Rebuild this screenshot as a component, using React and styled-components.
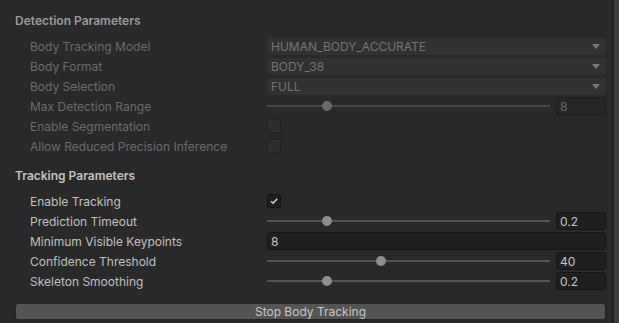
import React from 'react';
import styled, { createGlobalStyle } from 'styled-components';

const GlobalStyle = createGlobalStyle`
  *, *::before, *::after {
    box-sizing: border-box;
  }
  html, body {
    margin: 0;
    padding: 0;
    background: #292929;
  }
  body {
    font-family: Inter, "Noto Sans", sans-serif;
    font-size: 12px;
    -webkit-font-smoothing: antialiased;
  }
`;

const Window = styled.div`
  display: flex;
  width: 619px;
  height: 323px;
  overflow: hidden;
  background: #292929;
`;

const Inspector = styled.div`
  flex: 1;
  display: flex;
  flex-direction: column;
  padding: 11px 6px 0 15px;
  gap: 10px;
`;

const Scrollbar = styled.div`
  width: 7px;
  border-left: 2px solid #1f1f1f;
  background: #3c3c3c;
`;

const Section = styled.div`
  display: flex;
  flex-direction: column;
`;

const Header = styled.div`
  height: 20px;
  line-height: 20px;
  margin-bottom: 5px;
  font-weight: 600;
  color: ${(p) => (p.disabled ? '#9a9a9a' : '#c2c2c2')};
`;

const Row = styled.div`
  display: flex;
  align-items: center;
  height: 20px;
  padding-left: 15px;
`;

const Label = styled.div`
  width: 237px;
  flex-shrink: 0;
  color: ${(p) => (p.disabled ? '#6b6b6b' : '#c0c0c0')};
  white-space: nowrap;
`;

const Field = styled.div`
  flex: 1;
  display: flex;
  align-items: center;
  min-width: 0;
`;

const Dropdown = styled.div`
  flex: 1;
  height: 17px;
  display: flex;
  align-items: center;
  justify-content: space-between;
  padding: 0 6px 0 4px;
  border-radius: 3px;
  background: #313131;
  color: #747474;
`;

const Arrow = styled.span`
  width: 0;
  height: 0;
  border-left: 4px solid transparent;
  border-right: 4px solid transparent;
  border-top: 5px solid #7a7a7a;
`;

const SliderTrack = styled.div`
  position: relative;
  flex: 1;
  height: 2px;
  margin-right: 6px;
  background: ${(p) => (p.disabled ? '#464646' : '#545454')};
`;

const Knob = styled.span`
  position: absolute;
  top: -4px;
  width: 10px;
  height: 10px;
  margin-left: -5px;
  border-radius: 50%;
  background: ${(p) => (p.disabled ? '#6a6a6a' : '#8e8e8e')};
`;

const NumberBox = styled.div`
  width: ${(p) => (p.wide ? 'auto' : '50px')};
  flex: ${(p) => (p.wide ? 1 : 'none')};
  height: 18px;
  display: flex;
  align-items: center;
  padding: 0 3px;
  border-radius: 3px;
  border: 1px solid ${(p) => (p.disabled ? '#1e1e1e' : '#161616')};
  background: ${(p) => (p.disabled ? '#262626' : '#1f1f1f')};
  color: ${(p) => (p.disabled ? '#6a6a6a' : '#c4c4c4')};
`;

const Checkbox = styled.div`
  width: 14px;
  height: 14px;
  border-radius: 2px;
  border: 1px solid ${(p) => (p.disabled ? '#232323' : '#151515')};
  background: ${(p) => (p.disabled ? '#2e2e2e' : '#1f1f1f')};
  display: flex;
  align-items: center;
  justify-content: center;
`;

const Button = styled.div`
  margin-top: 12px;
  height: 17px;
  line-height: 15px;
  text-align: center;
  border-radius: 3px;
  border: 1px solid #242424;
  background: #545454;
  color: #c8c8c8;
`;

function Slider({ value, min, max, disabled }) {
  const pct = (value - min) / (max - min);
  return (
    <Field>
      <SliderTrack disabled={disabled}>
        <Knob disabled={disabled} style={{ left: `calc(5px + ${pct} * (100% - 10px))` }} />
      </SliderTrack>
      <NumberBox disabled={disabled}>{value}</NumberBox>
    </Field>
  );
}

function Check({ checked, disabled }) {
  return (
    <Field>
      <Checkbox disabled={disabled}>
        {checked && (
          <svg width="10" height="10" viewBox="0 0 10 10">
            <path d="M2 5.2 L4.1 7.2 L8.2 2.8" fill="none" stroke="#d8d8d8" strokeWidth="1.4" />
          </svg>
        )}
      </Checkbox>
    </Field>
  );
}

function Select({ value }) {
  return (
    <Field>
      <Dropdown>
        {value}
        <Arrow />
      </Dropdown>
    </Field>
  );
}

export default function App() {
  return (
    <Window>
      <GlobalStyle />
      <Inspector>
        <Section>
          <Header disabled>Detection Parameters</Header>
          <Row>
            <Label disabled>Body Tracking Model</Label>
            <Select value="HUMAN_BODY_ACCURATE" />
          </Row>
          <Row>
            <Label disabled>Body Format</Label>
            <Select value="BODY_38" />
          </Row>
          <Row>
            <Label disabled>Body Selection</Label>
            <Select value="FULL" />
          </Row>
          <Row>
            <Label disabled>Max Detection Range</Label>
            <Slider value={8} min={0} max={40} disabled />
          </Row>
          <Row>
            <Label disabled>Enable Segmentation</Label>
            <Check disabled />
          </Row>
          <Row>
            <Label disabled>Allow Reduced Precision Inference</Label>
            <Check disabled />
          </Row>
        </Section>
        <Section>
          <Header>Tracking Parameters</Header>
          <Row>
            <Label>Enable Tracking</Label>
            <Check checked />
          </Row>
          <Row>
            <Label>Prediction Timeout</Label>
            <Slider value={0.2} min={0} max={1} />
          </Row>
          <Row>
            <Label>Minimum Visible Keypoints</Label>
            <Field>
              <NumberBox wide>8</NumberBox>
            </Field>
          </Row>
          <Row>
            <Label>Confidence Threshold</Label>
            <Slider value={40} min={0} max={100} />
          </Row>
          <Row>
            <Label>Skeleton Smoothing</Label>
            <Slider value={0.2} min={0} max={1} />
          </Row>
          <Button>Stop Body Tracking</Button>
        </Section>
      </Inspector>
      <Scrollbar />
    </Window>
  );
}
